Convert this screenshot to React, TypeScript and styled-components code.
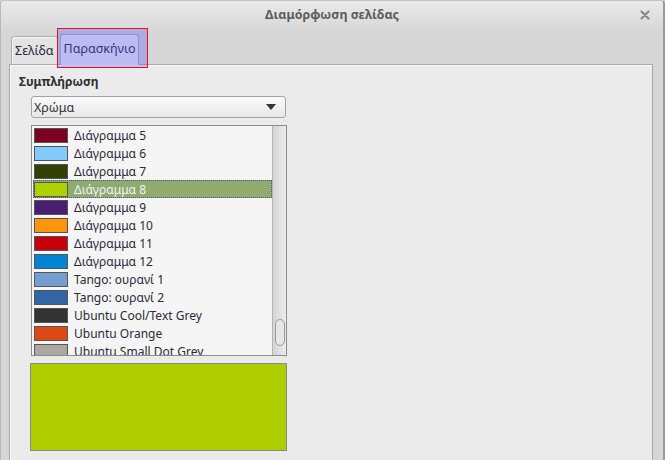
import React from "react";
import styled, { createGlobalStyle } from "styled-components";

const Global = createGlobalStyle`
  html, body { margin: 0; padding: 0; background: #d6d6d6; }
  body { font-family: "Noto Sans", "DejaVu Sans", sans-serif; font-size: 12px; color: #3c3c3c; }
  * { box-sizing: border-box; }
`;

const Window = styled.div`
  width: 665px;
  height: 460px;
  display: flex;
  flex-direction: column;
  background: #d6d6d6;
  border-left: 1px solid #b8b8b8;
  border-right: 2px solid #9a9a9a;
  border-top: 1px solid #c4c4c4;
  border-radius: 4px 4px 0 0;
  overflow: hidden;
`;

const TitleBar = styled.div`
  height: 29px;
  display: grid;
  grid-template-columns: 1fr auto 1fr;
  align-items: center;
  background: linear-gradient(#e9e9e9, #d8d8d8);
`;

const Title = styled.div`
  grid-column: 2;
  font-size: 12.5px;
  font-weight: bold;
  color: #5c5c5c;
  margin-top: -2px;
`;

const Close = styled.div`
  grid-column: 3;
  justify-self: end;
  margin-right: 13px;
  margin-top: -2px;
  width: 10px;
  height: 10px;
  display: flex;
`;

const Body = styled.div`
  flex: 1;
  display: flex;
  flex-direction: column;
  padding: 5px 10px 0 8px;
`;

const TabRow = styled.div`
  display: flex;
  align-items: flex-end;
  gap: 2px;
  padding-left: 2px;
  height: 30px;
  position: relative;
  z-index: 1;
  margin-bottom: -1px;
`;

const Tab = styled.div<{ $active?: boolean }>`
  position: relative;
  height: ${(p) => (p.$active ? 31 : 29)}px;
  padding: 0 3px;
  display: flex;
  align-items: center;
  padding-bottom: ${(p) => (p.$active ? 2 : 1)}px;
  font-size: 12.5px;
  color: #2a2a3a;
  background: ${(p) => (p.$active ? "#ececec" : "#e3e3e3")};
  border: 1px solid #ababab;
  border-bottom: ${(p) => (p.$active ? "1px solid #ececec" : "1px solid #ababab")};
  border-radius: 3px 3px 0 0;
  box-shadow: inset 1px 1px 0 #f6f6f6;
`;

const Highlight = styled.span`
  position: absolute;
  left: -4px;
  right: -10px;
  top: -7px;
  bottom: -4px;
  border: 1px solid #e8121a;
  background: rgba(80, 80, 255, 0.31);
  pointer-events: none;
`;

const Panel = styled.div`
  flex: 1;
  background: #ebebeb;
  border: 1px solid #a8a8a8;
  border-bottom: none;
  box-shadow: inset 1px 1px 0 #fafafa;
  padding: 8px 0 0 9px;
  display: flex;
  flex-direction: column;
`;

const SectionLabel = styled.div`
  font-weight: bold;
  font-size: 12px;
  color: #2e2e2e;
  height: 18px;
  line-height: 18px;
`;

const Indent = styled.div`
  padding-left: 12px;
  display: flex;
  flex-direction: column;
  width: 268px;
`;

const Select = styled.div`
  margin-top: 5px;
  height: 22px;
  width: 255px;
  border: 1px solid #a3a3a3;
  border-radius: 3px;
  background: linear-gradient(#fafafa, #e8e8e8);
  display: flex;
  align-items: center;
  justify-content: space-between;
  padding: 0 9px 0 2px;
  font-size: 12.5px;
  color: #333;
`;

const Arrow = styled.span`
  width: 0;
  height: 0;
  border-left: 5px solid transparent;
  border-right: 5px solid transparent;
  border-top: 6px solid #333;
`;

const ListBox = styled.div`
  margin-top: 7px;
  width: 256px;
  height: 231px;
  border: 1px solid #8c8c8c;
  background: #f5f5f5;
  display: flex;
  overflow: hidden;
`;

const Rows = styled.div`
  flex: 1;
  display: flex;
  flex-direction: column;
  padding-left: 1px;
`;

const Row = styled.div<{ $selected?: boolean }>`
  height: 18px;
  flex: none;
  display: flex;
  align-items: center;
  gap: 6px;
  padding-left: 1px;
  font-size: 12px;
  color: ${(p) => (p.$selected ? "#f2f2ff" : "#2a2a3a")};
  background: ${(p) => (p.$selected ? "#8fab6d" : "transparent")};
  outline: ${(p) => (p.$selected ? "1px dotted #5a4a9a" : "none")};
  outline-offset: -1px;
  white-space: nowrap;
`;

const Swatch = styled.span<{ $c: string }>`
  width: 34px;
  height: 15px;
  flex: none;
  background: ${(p) => p.$c};
  border: 1px solid #555;
`;

const Scrollbar = styled.div`
  width: 14px;
  flex: none;
  border-left: 1px solid #b4b4b4;
  background: linear-gradient(90deg, #d4d4d4, #ececec);
  display: flex;
  flex-direction: column;
  justify-content: flex-end;
  align-items: center;
  padding-bottom: 9px;
`;

const Thumb = styled.div`
  width: 10px;
  height: 27px;
  border: 1px solid #9a9a9a;
  border-radius: 5px;
  background: #e6e6e6;
`;

const Preview = styled.div<{ $c: string }>`
  margin-top: 7px;
  margin-left: -1px;
  width: 257px;
  height: 88px;
  border: 1px solid #888;
  background: ${(p) => p.$c};
`;

const items: [string, string][] = [
  ["#7e0021", "Διάγραμμα 5"],
  ["#83caff", "Διάγραμμα 6"],
  ["#314004", "Διάγραμμα 7"],
  ["#aecf00", "Διάγραμμα 8"],
  ["#4b1f6f", "Διάγραμμα 9"],
  ["#ff950e", "Διάγραμμα 10"],
  ["#c5000b", "Διάγραμμα 11"],
  ["#0084d1", "Διάγραμμα 12"],
  ["#729fcf", "Tango: ουρανί 1"],
  ["#3465a4", "Tango: ουρανί 2"],
  ["#333333", "Ubuntu Cool/Text Grey"],
  ["#dd4814", "Ubuntu Orange"],
  ["#aea79f", "Ubuntu Small Dot Grey"],
];

export default function App() {
  return (
    <>
      <Global />
      <Window>
        <TitleBar>
          <Title>Διαμόρφωση σελίδας</Title>
          <Close>
            <svg width="10" height="10" viewBox="0 0 10 10">
              <path d="M1.5 1.5 L8.5 8.5 M8.5 1.5 L1.5 8.5" stroke="#8a8a8a" strokeWidth="2.2" strokeLinecap="round" />
            </svg>
          </Close>
        </TitleBar>
        <Body>
          <TabRow>
            <Tab>Σελίδα</Tab>
            <Tab $active>
              Παρασκήνιο
              <Highlight />
            </Tab>
          </TabRow>
          <Panel>
            <SectionLabel>Συμπλήρωση</SectionLabel>
            <Indent>
              <Select>
                <span>Χρώμα</span>
                <Arrow />
              </Select>
              <ListBox>
                <Rows>
                  {items.map(([c, n], i) => (
                    <Row key={n} $selected={i === 3}>
                      <Swatch $c={c} />
                      {n}
                    </Row>
                  ))}
                </Rows>
                <Scrollbar>
                  <Thumb />
                </Scrollbar>
              </ListBox>
              <Preview $c="#afce00" />
            </Indent>
          </Panel>
        </Body>
      </Window>
    </>
  );
}
